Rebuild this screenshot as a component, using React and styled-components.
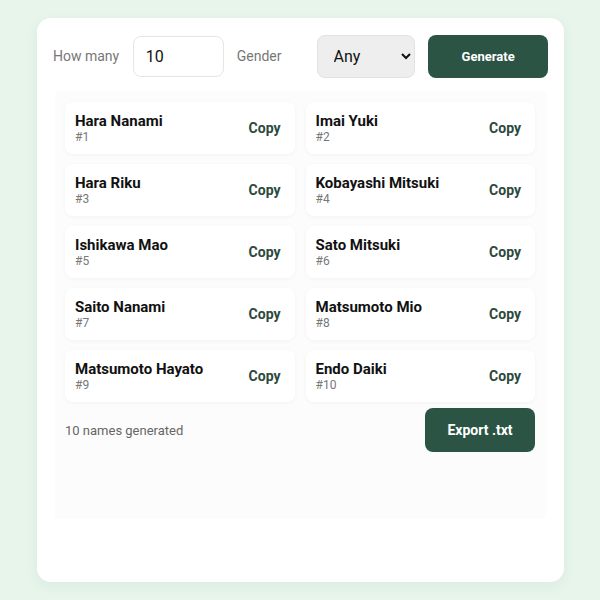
import React, { useState } from 'react';
import styled, { createGlobalStyle } from 'styled-components';

const GlobalStyle = createGlobalStyle`
  html, body {
    margin: 0;
    padding: 0;
    background: #e7f5eb;
    font-family: Roboto, "Liberation Sans", Arial, sans-serif;
  }
`;

const Page = styled.div`
  padding: 18px 36px 18px 37px;
`;

const Card = styled.div`
  width: 527px;
  height: 564px;
  box-sizing: border-box;
  background: #ffffff;
  border-radius: 14px;
  padding: 16px;
  box-shadow: 0 4px 14px rgba(40, 90, 60, 0.06);
`;

const Controls = styled.div`
  display: flex;
  align-items: center;
  gap: 13px;
  height: 44px;
  margin-bottom: 13px;
`;

const Label = styled.label`
  width: 67px;
  font-size: 14px;
  color: #777;
`;

const NumberInput = styled.input`
  width: 91px;
  height: 41px;
  box-sizing: border-box;
  border: 1px solid #e6e6e6;
  border-radius: 8px;
  padding: 0 12px;
  font-family: inherit;
  font-size: 16px;
  color: #111;
  outline: none;
`;

const Select = styled.select`
  width: 99px;
  height: 43px;
  box-sizing: border-box;
  border: 1px solid #e2e2e2;
  border-radius: 8px;
  background: #eeeeee;
  padding: 0 10px 0 12px;
  font-family: inherit;
  font-size: 16px;
  color: #111;
`;

const PrimaryButton = styled.button`
  width: ${(p) => p.$width}px;
  height: ${(p) => p.$height}px;
  border: none;
  border-radius: 8px;
  background: #2b5445;
  color: #fff;
  font-family: inherit;
  font-weight: 700;
  font-size: ${(p) => p.$size}px;
  cursor: pointer;
  margin-left: auto;
`;

const Panel = styled.div`
  margin: 0 2px;
  height: 428px;
  box-sizing: border-box;
  background: #fcfcfc;
  border-radius: 4px;
  padding: 11px 11px 0 10px;
`;

const Grid = styled.div`
  display: grid;
  grid-template-columns: 1fr 1fr;
  column-gap: 11px;
  row-gap: 10px;
`;

const Item = styled.div`
  display: flex;
  align-items: center;
  justify-content: space-between;
  height: 52px;
  box-sizing: border-box;
  background: #fff;
  border-radius: 8px;
  padding: 10px 14px 10px 10px;
  box-shadow: 0 1px 4px rgba(0, 0, 0, 0.04);
`;

const Name = styled.div`
  font-size: 15px;
  line-height: 18px;
  font-weight: 700;
  color: #111;
`;

const Index = styled.div`
  font-size: 12px;
  line-height: 14px;
  color: #777;
`;

const CopyButton = styled.button`
  border: none;
  background: none;
  padding: 0;
  font-family: inherit;
  font-size: 14px;
  font-weight: 700;
  color: #2c493d;
  cursor: pointer;
`;

const Footer = styled.div`
  display: flex;
  align-items: center;
  justify-content: space-between;
  margin-top: 6px;
`;

const Count = styled.span`
  font-size: 13px;
  color: #666;
`;

const names = [
  'Hara Nanami',
  'Imai Yuki',
  'Hara Riku',
  'Kobayashi Mitsuki',
  'Ishikawa Mao',
  'Sato Mitsuki',
  'Saito Nanami',
  'Matsumoto Mio',
  'Matsumoto Hayato',
  'Endo Daiki',
];

const App = () => {
  const [count, setCount] = useState('10');
  const [gender, setGender] = useState('any');

  return (
    <>
      <GlobalStyle />
      <Page>
        <Card>
          <Controls>
            <Label>How many</Label>
            <NumberInput value={count} onChange={(e) => setCount(e.target.value)} />
            <Label>Gender</Label>
            <Select value={gender} onChange={(e) => setGender(e.target.value)}>
              <option value="any">Any</option>
              <option value="male">Male</option>
              <option value="female">Female</option>
            </Select>
            <PrimaryButton type="button" $width={120} $height={43} $size={13}>Generate</PrimaryButton>
          </Controls>
          <Panel>
            <Grid>
              {names.map((name, i) => (
                <Item key={name}>
                  <div>
                    <Name>{name}</Name>
                    <Index>#{i + 1}</Index>
                  </div>
                  <CopyButton type="button">Copy</CopyButton>
                </Item>
              ))}
            </Grid>
            <Footer>
              <Count>10 names generated</Count>
              <PrimaryButton type="button" $width={110} $height={44} $size={14}>Export .txt</PrimaryButton>
            </Footer>
          </Panel>
        </Card>
      </Page>
    </>
  );
};

export default App;
